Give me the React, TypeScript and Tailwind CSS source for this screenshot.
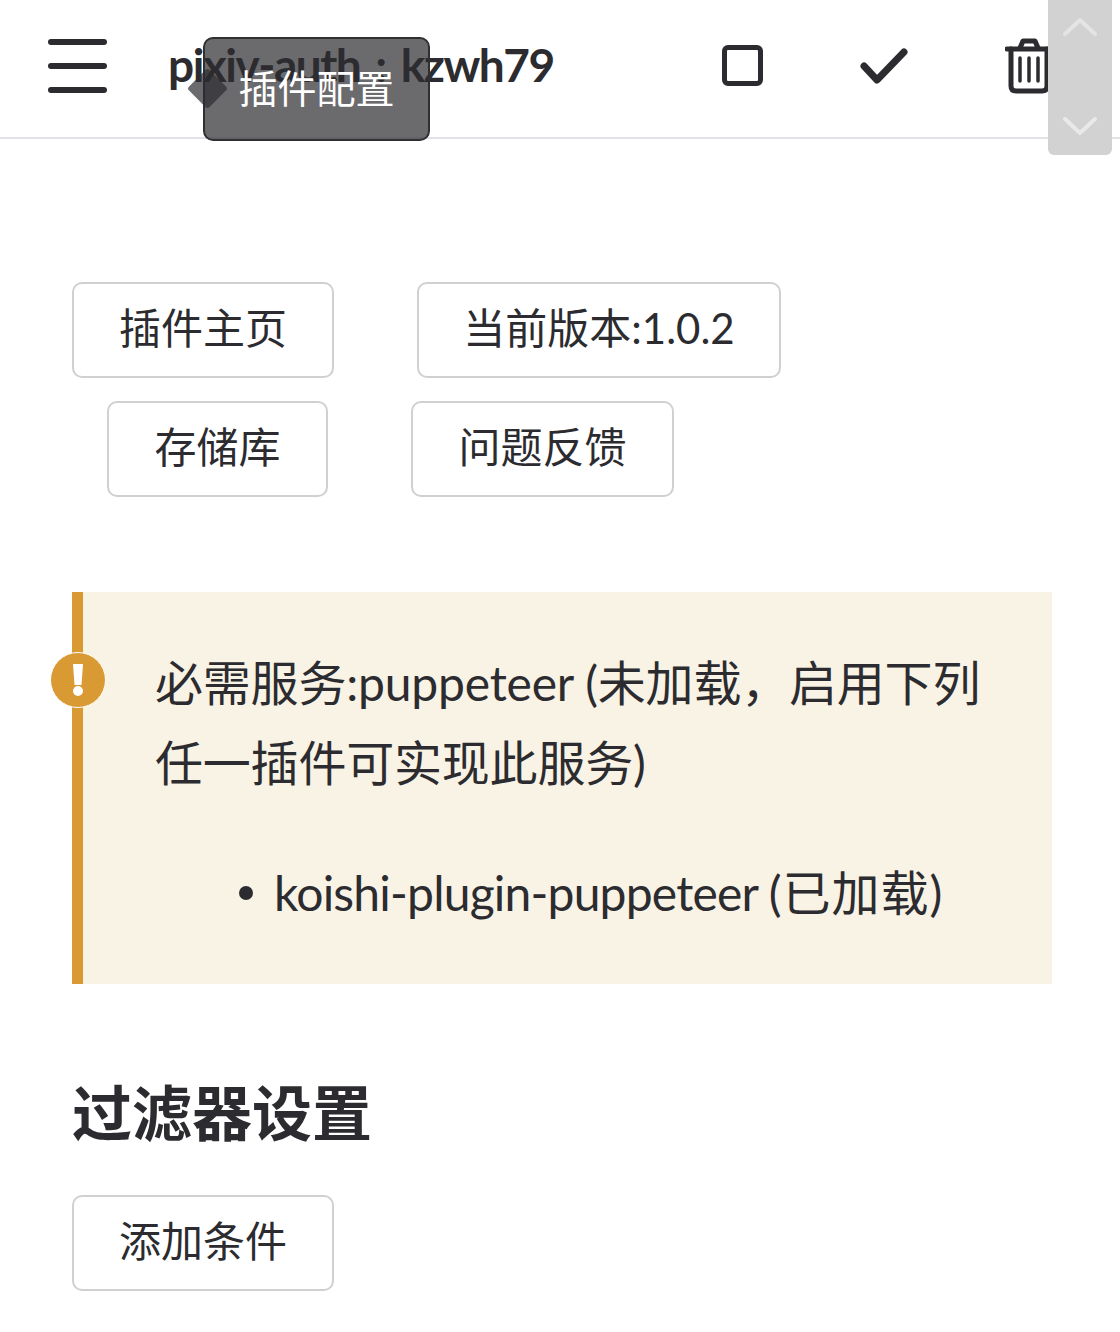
import type { ReactNode } from "react";

const font = { fontFamily: '"Lato", "Noto Sans CJK SC", sans-serif' };

function LinkButton({ children, width }: { children: ReactNode; width: string }) {
  return (
    <button className={`h-[96px] ${width} shrink-0 rounded-[10px] border-2 border-[#d0d0d0] bg-white pb-[3px] text-[42px] font-normal text-[#2c2c30]`}>
      {children}
    </button>
  );
}

export default function App() {
  return (
    <div className="relative h-[1332px] w-[1120px] overflow-hidden bg-white text-[#2c2c30]" style={font}>
      {/* Top bar */}
      <header className="flex h-[139px] items-center border-b-2 border-[#e2e3e6] pl-[48px] pr-[67px]">
        <div className="flex w-[59px] shrink-0 flex-col gap-[18px] pb-[6px]">
          <span className="h-[6px] rounded-full bg-[#2c2c30]" />
          <span className="h-[6px] rounded-full bg-[#2c2c30]" />
          <span className="h-[6px] rounded-full bg-[#2c2c30]" />
        </div>
        <h1 className="ml-[61px] w-[384px] whitespace-nowrap pb-[8px] text-[46px] font-bold leading-none tracking-[-1.5px]">
          pixiv-auth<span className="mx-[15px]">:</span>kzwh79
        </h1>
        <div className="ml-auto flex items-center gap-[97px] pb-[6px]">
          <span className="h-[41px] w-[41px] rounded-[6px] border-[5px] border-[#2c2c30]" />
          <svg width="48" height="38" viewBox="0 0 48 38" fill="none" stroke="#2c2c30" strokeWidth="7" strokeLinecap="round" strokeLinejoin="round">
            <path d="M4 19L17 33L44 5" />
          </svg>
          <svg width="48" height="56" viewBox="0 0 48 56" fill="none" stroke="#2c2c30" strokeLinecap="round" strokeLinejoin="round">
            <path d="M2 11H46" strokeWidth="5" />
            <path d="M15 10L18 3H30L33 10" strokeWidth="5" />
            <path d="M6 11V48Q6 53 11 53H37Q42 53 42 48V11" strokeWidth="5" />
            <path d="M15 20V43M24 20V43M33 20V43" strokeWidth="3.5" />
          </svg>
        </div>
      </header>

      {/* Tooltip over the title */}
      <div className="absolute left-[203px] top-[37px] flex h-[104px] w-[227px] justify-center rounded-[10px] border-2 border-[#303033] bg-[#2c2c30]/70 pt-[25px] text-[39px] font-normal leading-[48px] text-white">
        插件配置
        <span className="absolute left-[-12px] top-[35px] h-[29px] w-[29px] rotate-45 rounded-[3px] bg-[#2c2c30]/70" />
      </div>

      {/* Scroll arrows */}
      <div className="absolute left-[1048px] top-0 flex h-[155px] w-[64px] flex-col items-center justify-between rounded-b-[6px] bg-[#d2d2d2] pb-[20px] pt-[18px]">
        <svg width="34" height="18" viewBox="0 0 34 18" fill="none" stroke="#e4e4e4" strokeWidth="4" strokeLinecap="round" strokeLinejoin="round">
          <path d="M2 16L17 2L32 16" />
        </svg>
        <svg width="34" height="18" viewBox="0 0 34 18" fill="none" stroke="#e9e9e9" strokeWidth="4" strokeLinecap="round" strokeLinejoin="round">
          <path d="M2 2L17 16L32 2" />
        </svg>
      </div>

      <main className="pl-[72px] pt-[143px]">
        <div className="flex gap-[83px]">
          <LinkButton width="w-[262px]">插件主页</LinkButton>
          <LinkButton width="w-[364px]">当前版本:1.0.2</LinkButton>
        </div>
        <div className="ml-[35px] mt-[23px] flex gap-[83px]">
          <LinkButton width="w-[221px]">存储库</LinkButton>
          <LinkButton width="w-[263px]">问题反馈</LinkButton>
        </div>

        {/* Warning block */}
        <section className="relative mt-[95px] h-[392px] w-[980px] border-l-[11px] border-[#d99a33] bg-[#f9f3e5] pl-[72px] pt-[51px] text-[48px] font-normal leading-[80px]">
          <span className="absolute left-[-33px] top-[60px] flex h-[56px] w-[56px] items-center justify-center rounded-full border border-white bg-[#d99a33]">
            <svg width="12" height="32" viewBox="0 0 12 32" fill="white">
              <path d="M1 0H11L9.5 21H2.5Z" />
              <circle cx="6" cy="27" r="5" />
            </svg>
          </span>
          <p className="w-[860px] tracking-[-0.2px]">必需服务:puppeteer (未加载，启用下列任一插件可实现此服务)</p>
          <ul className="ml-[84px] mt-[50px] whitespace-nowrap">
            <li className="flex items-center gap-[21px]">
              <span className="h-[14px] w-[14px] rounded-full bg-[#2c2c30]" />
              <span className="tracking-[-0.8px]">
                koishi-plugin-puppeteer <span className="tracking-[1px]">(已加载)</span>
              </span>
            </li>
          </ul>
        </section>

        <h2 className="mt-[94px] text-[60px] font-bold leading-[70px]">过滤器设置</h2>
        <div className="mt-[47px]">
          <LinkButton width="w-[262px]">添加条件</LinkButton>
        </div>
      </main>
    </div>
  );
}
